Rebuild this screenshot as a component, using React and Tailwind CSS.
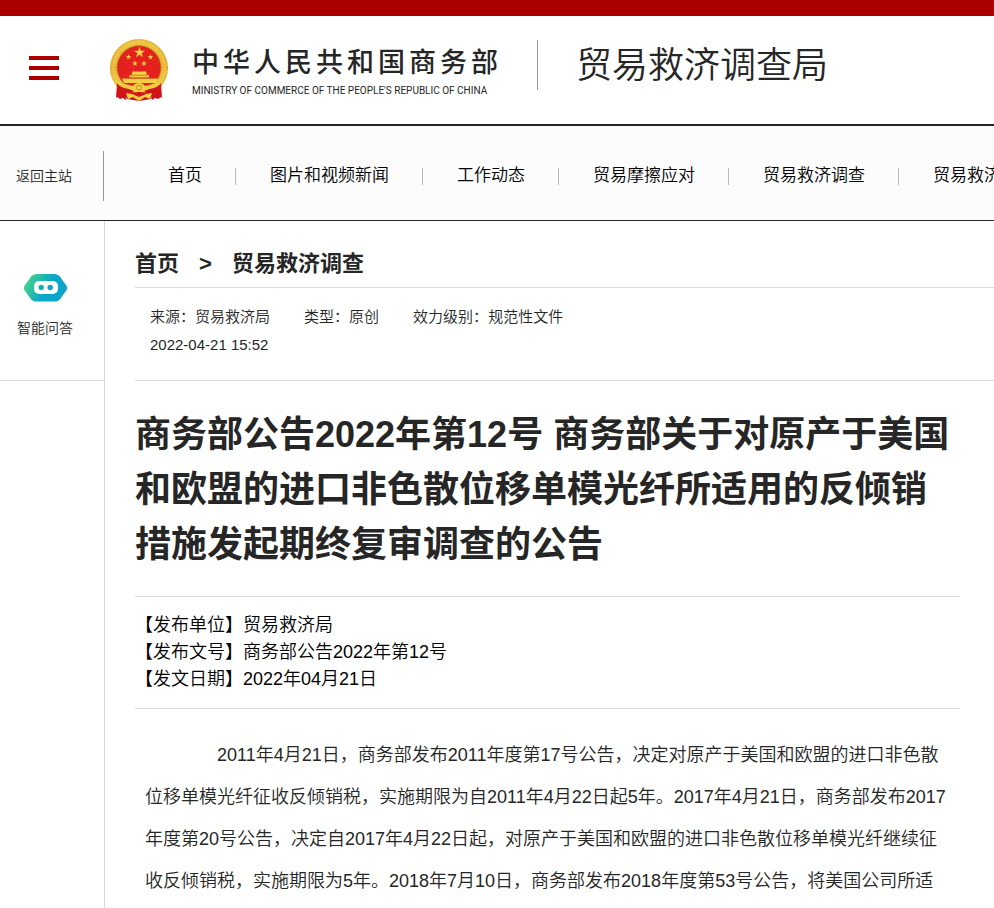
import React from "react";

const NAV_ITEMS = [
  "首页",
  "图片和视频新闻",
  "工作动态",
  "贸易摩擦应对",
  "贸易救济调查",
  "贸易救济预警",
];

const META = [
  ["来源", "贸易救济局"],
  ["类型", "原创"],
  ["效力级别", "规范性文件"],
];

const DETAILS = [
  ["发布单位", "贸易救济局"],
  ["发布文号", "商务部公告2022年第12号"],
  ["发文日期", "2022年04月21日"],
];

const STAR = "M0-10 2.3-3.1 9.5-3.1 3.7 1.2 5.9 8.1 0 3.9-5.9 8.1-3.7 1.2-9.5-3.1-2.3-3.1Z";

function Emblem() {
  return (
    <svg width="58" height="63" viewBox="0 0 58 63" aria-hidden="true" className="shrink-0">
      <defs>
        <linearGradient id="gold" x1="0" y1="0" x2="0" y2="1">
          <stop offset="0" stopColor="#ecbf3e" />
          <stop offset="0.5" stopColor="#e6b232" />
          <stop offset="1" stopColor="#f6d64a" />
        </linearGradient>
      </defs>
      <circle cx="29" cy="29" r="29" fill="url(#gold)" />
      <circle cx="29" cy="29" r="25.5" fill="none" stroke="#f6d860" strokeWidth="3" strokeDasharray="2 1" opacity="0.5" />
      <circle cx="29" cy="29" r="28.4" fill="none" stroke="#cf9420" strokeWidth="1" strokeDasharray="2 2" opacity="0.4" />
      <circle cx="29" cy="28.5" r="22.3" fill="#b98a1c" />
      <circle cx="29" cy="28.7" r="21.6" fill="#e4211f" />
      <g fill="#f3cf45">
        <path d={STAR} transform="translate(29.5 13.5) scale(.58)" />
        <path d={STAR} transform="translate(18.5 18) scale(.3)" />
        <path d={STAR} transform="translate(40.5 18) scale(.3)" />
        <path d={STAR} transform="translate(25 24.5) scale(.3)" />
        <path d={STAR} transform="translate(34 24.5) scale(.3)" />
        <path d="M22.500 32.500h13.500l1 3.500h2v2.500H19.500V36h2Z" />
        <path d="M12 39.500h36l-2 4.500H14Z" />
      </g>
      <path d="M20.500 36.300h17M13 39.200h33" stroke="#c8601d" strokeWidth="0.700" />
      {/* ribbon on both sides of the cog */}
      <path d="M7 44q3 5 12 6l5 2-7 4-1 5-3-2-3 1-3-2-1 1Z" fill="#d0141a" />
      <path d="M51 44q-3 5-12 6l-5 2 7 4 1 5 3-2 3 1 3-2 1 1Z" fill="#d0141a" />
      <path d="M14 52q6 2 15 1 9 1 15-1l-3 8-12 2-12-2Z" fill="#d0141a" />
      <path d="M12 44q6 2 11 3 2-3 6-3t6 3q5-1 11-3-4 6-11 7l-6 2-6-2q-7-1-11-7Z" fill="#f2cc40" />
      <circle cx="29" cy="48.700" r="2.200" fill="#f8e06a" stroke="#c9731d" strokeWidth="1" />
      <path d="m16 54 6 1 7 3 7-3 6-1-2 6-5-2-6 4-6-4-5 2Z" fill="#f4d144" />
    </svg>
  );
}

function AssistantIcon() {
  return (
    <svg width="43" height="28" viewBox="0 0 43 28" aria-hidden="true">
      <defs>
        <linearGradient id="assistant" x1="0" y1="0" x2="1" y2="0.350">
          <stop offset="0.050" stopColor="#4cda83" />
          <stop offset="0.650" stopColor="#0aa5c9" />
          <stop offset="1" stopColor="#0aa5c9" />
        </linearGradient>
      </defs>
      <path
        d="M13 0h17c3 0 5 1 7 4l2 3 3 4c1.500 2 1.500 4 0 6l-3 4-2 3c-2 3-4 3.500-7 3.500H13c-3 0-5-.5-7-3.500l-2-3-3-4c-1.500-2-1.500-4 0-6l3-4 2-3c2-3 4-4 7-4Z"
        fill="url(#assistant)"
      />
      <rect x="10" y="7" width="24" height="13" rx="5" fill="#fff" />
      <circle cx="17.200" cy="13.500" r="2.700" fill="#16adbf" />
      <circle cx="26.200" cy="13.500" r="2.700" fill="#0aa5c9" />
    </svg>
  );
}

function Header() {
  return (
    <header className="flex items-start border-t-16 border-b-2 border-t-[#aa0000] border-b-[#262626] pb-[22px] pl-7 pt-[23px]">
      <button type="button" aria-label="菜单" className="mt-[17px] flex w-8 shrink-0 flex-col gap-[6px] px-px">
        <span className="h-1 w-full bg-[#aa0000]" />
        <span className="h-1 w-full bg-[#aa0000]" />
        <span className="h-1 w-full bg-[#aa0000]" />
      </button>
      <a href="#" className="ml-[50px] flex shrink-0 gap-6">
        <Emblem />
        <span className="flex w-[306px] flex-col pt-1">
          <span className="text-[27px] font-medium leading-10 [text-align-last:justify]">中华人民共和国商务部</span>
          <span className="whitespace-nowrap font-['Roboto',sans-serif] text-[10px] leading-4">
            MINISTRY OF COMMERCE OF THE PEOPLE'S REPUBLIC OF CHINA
          </span>
        </span>
      </a>
      <div className="ml-[39px] mt-px flex h-[50px] items-center whitespace-nowrap border-l border-[#999] pl-[38px] pt-[2px] text-4xl font-[350]">
        贸易救济调查局
      </div>
    </header>
  );
}

function Nav() {
  return (
    <nav className="flex h-[95px] items-center overflow-hidden border-b border-[#262626] bg-[#fcfcfc] pt-[6px]">
      <a href="#" className="flex h-[50px] w-[104px] shrink-0 items-center border-r border-[#999] pl-4 text-sm font-[350]">
        返回主站
      </a>
      <ul className="ml-[30px] flex items-center text-[17px] font-[350] text-black">
        {NAV_ITEMS.map((item) => (
          <li key={item} className="flex shrink-0 items-center whitespace-nowrap pl-[34px] leading-6">
            <a href="#">{item}</a>
            <span className="ml-[33px] h-[17px] w-px bg-[#bbb]" />
          </li>
        ))}
      </ul>
    </nav>
  );
}

export default function App() {
  return (
    <div className="flex min-h-screen flex-col overflow-x-hidden bg-white font-['Liberation_Sans','Noto_Sans_CJK_SC',sans-serif] text-[#262626]">
      <Header />
      <Nav />
      <div className="flex flex-1">
        <aside className="w-[105px] shrink-0 border-r border-[#d9d9d9]">
          <a href="#" className="flex h-40 flex-col items-center gap-4 border-b border-[#d9d9d9] pr-[14px] pt-[53px] text-sm font-[350]">
            <AssistantIcon />
            智能问答
          </a>
        </aside>
        <main className="min-w-0 flex-1 pl-[30px]">
          <div className="flex items-center gap-5 border-b border-[#d9d9d9] pb-[7px] pt-[27px] text-[22px] font-bold leading-8">
            <a href="#">首页</a>
            <span>&gt;</span>
            <a href="#">贸易救济调查</a>
          </div>
          <div className="border-b border-[#d9d9d9] px-[15px] pb-[21px] pt-[15px] text-[15px] font-[350] leading-7">
            <div className="flex gap-[34px]">
              {META.map(([label, value]) => (
                <span key={label}>
                  {label}：{value}
                </span>
              ))}
            </div>
            <time className="block">2022-04-21 15:52</time>
          </div>
          <article className="mr-[34px]">
            <h1 className="border-b border-[#d9d9d9] pb-6 pt-[26px] text-4xl font-bold leading-[55px]">
              商务部公告2022年第12号 商务部关于对原产于美国和欧盟的进口非色散位移单模光纤所适用的反倾销措施发起期终复审调查的公告
            </h1>
            <div className="border-b border-[#d9d9d9] pb-[15px] pt-[15px] text-lg font-[350] leading-[27px] text-black">
              {DETAILS.map(([label, value]) => (
                <p key={label}>
                  【{label}】{value}
                </p>
              ))}
            </div>
            <p className="px-[10px] pt-[25px] indent-[72px] text-lg font-[350] leading-[42px]">
              2011年4月21日，商务部发布2011年度第17号公告，决定对原产于美国和欧盟的进口非色散位移单模光纤征收反倾销税，实施期限为自2011年4月22日起5年。2017年4月21日，商务部发布2017年度第20号公告，决定自2017年4月22日起，对原产于美国和欧盟的进口非色散位移单模光纤继续征收反倾销税，实施期限为5年。2018年7月10日，商务部发布2018年度第53号公告，将美国公司所适
            </p>
          </article>
        </main>
      </div>
    </div>
  );
}
